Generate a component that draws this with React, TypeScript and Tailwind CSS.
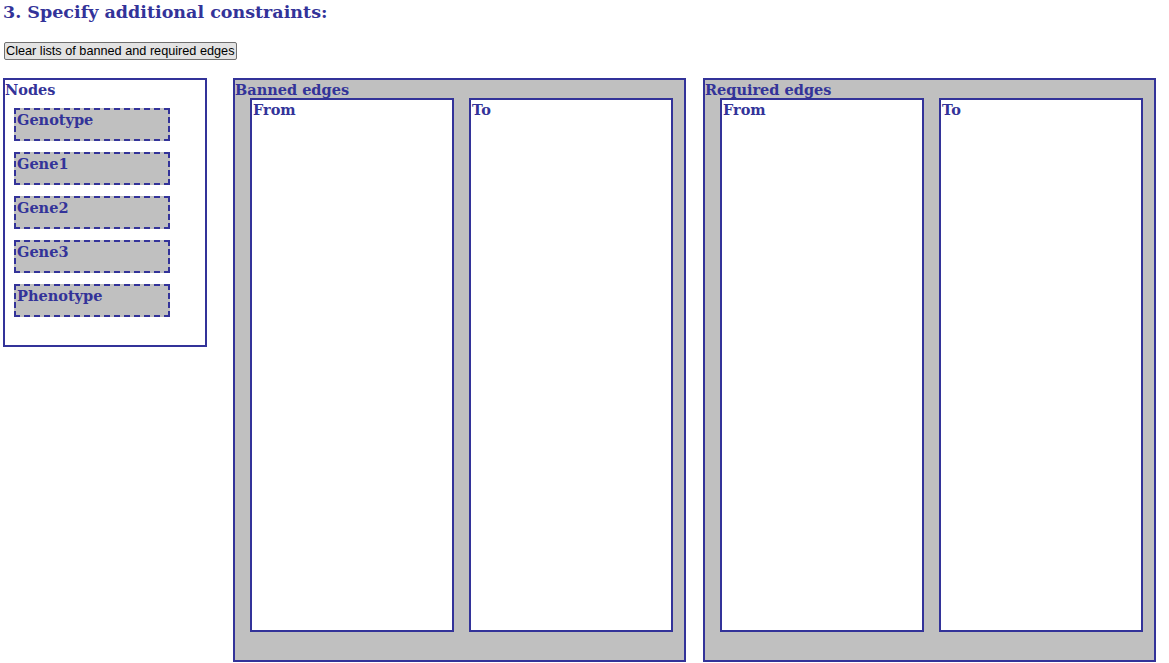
import React from 'react';

const nodes = ['Genotype', 'Gene1', 'Gene2', 'Gene3', 'Phenotype'];

const serif = "font-['DejaVu_Serif',Georgia,serif]";
const label = 'h-[18px] pt-[1px] text-[14.5px] leading-[18px] font-bold text-[#333399]';

const ListBox: React.FC<{ title: string }> = ({ title }) => (
  <div className="w-[204px] h-[534px] bg-white border-2 border-[#333399]">
    <div className={`pl-[1px] ${label}`}>{title}</div>
  </div>
);

const EdgePanel: React.FC<{ title: string }> = ({ title }) => (
  <div className="w-[453px] h-[584px] bg-[#c0c0c0] border-2 border-[#333399]">
    <div className={label}>{title}</div>
    <div className="flex gap-[15px] pl-[15px]">
      <ListBox title="From" />
      <ListBox title="To" />
    </div>
  </div>
);

export default function App() {
  return (
    <div className={`${serif} bg-white w-[1169px] h-[663px] overflow-hidden`}>
      <h1 className="pl-[3px] pt-[1px] h-[23px] text-[17.5px] leading-[22px] font-bold text-[#333399]">
        3. Specify additional constraints:
      </h1>
      <div className="flex pl-[4px] pt-[19px]">
        <button className="h-[18px] px-[1px] bg-[#e3e3e3] border border-[#707070] rounded-[2px] font-['Liberation_Sans',Arial,sans-serif] text-[12.7px] leading-[14px] text-black">
          Clear lists of banned and required edges
        </button>
      </div>
      <div className="flex items-start pl-[3px] pt-[18px]">
        <div className="w-[204px] h-[269px] bg-white border-2 border-[#333399]">
          <div className={label}>Nodes</div>
          <div className="flex flex-col gap-[11px] pl-[9px] pt-[10px]">
            {nodes.map(n => (
              <div
                key={n}
                className={`w-[156px] h-[33px] bg-[#c0c0c0] border-2 border-dashed border-[#333399] pl-[1px] ${label}`}
              >
                {n}
              </div>
            ))}
          </div>
        </div>
        <div className="ml-[26px]">
          <EdgePanel title="Banned edges" />
        </div>
        <div className="ml-[17px]">
          <EdgePanel title="Required edges" />
        </div>
      </div>
    </div>
  );
}
